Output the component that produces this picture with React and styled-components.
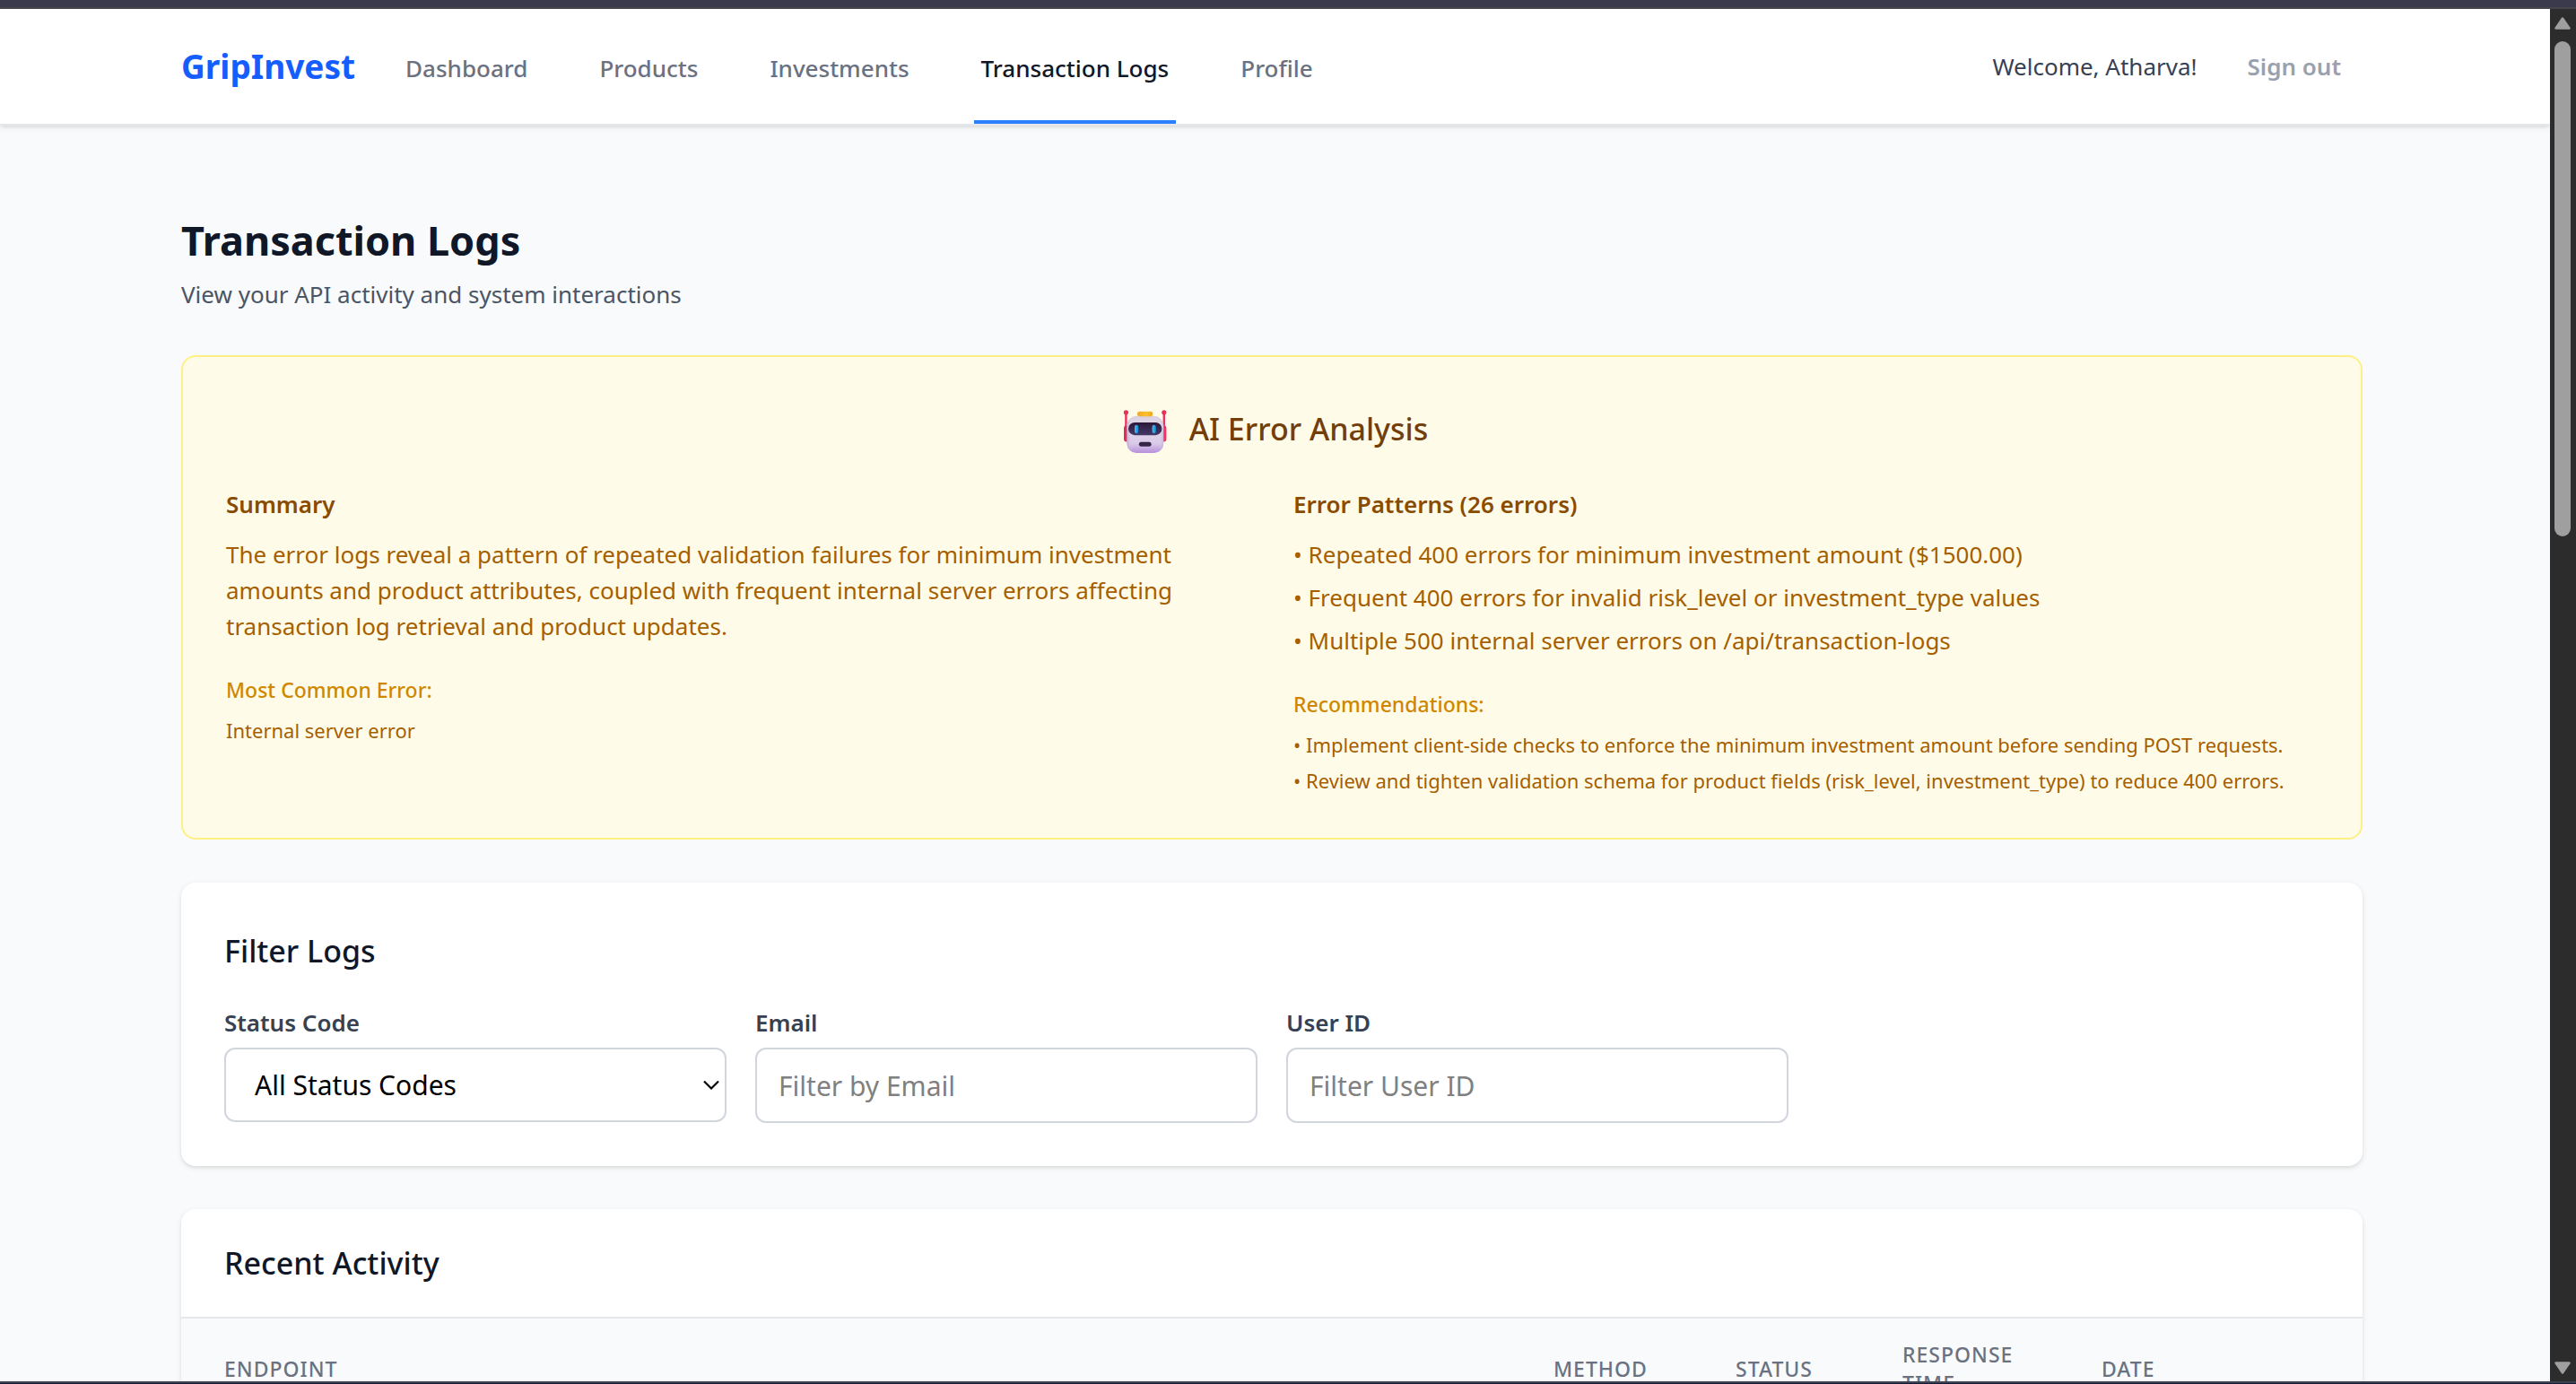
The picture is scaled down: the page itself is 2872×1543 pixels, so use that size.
import React from "react";
import styled, { createGlobalStyle } from "styled-components";

const Global = createGlobalStyle`
  *, *::before, *::after { box-sizing: border-box; }
  body {
    margin: 0;
    background: #f9fafb;
    color: #101828;
    font-family: "Noto Sans", "Open Sans", sans-serif;
    font-size: 32px;
    line-height: 48px;
  }
  h1, h2, h3, h4, p, ul { margin: 0; padding: 0; }
  ul { list-style: none; }
  a { color: inherit; text-decoration: none; }
`;

const Window = styled.div`
  display: flex;
  flex-direction: column;
  height: 100vh;
  overflow: hidden;
`;

const TopEdge = styled.div`
  flex: none;
  height: 10px;
  background: #3a3a4c;
  border-bottom: 2px solid #47474b;
`;

const BottomEdge = styled.div`
  flex: none;
  height: 3px;
  background: #151c38;
  border-top: 2px solid #3c424e;
`;

const Viewport = styled.div`
  flex: 1;
  min-height: 0;
  display: flex;
`;

const Page = styled.div`
  flex: 1;
  min-width: 0;
  overflow: hidden;
`;

const Container = styled.div`
  max-width: 2567px;
  margin: 0 auto;
  padding: 0 71px 0 64px;
`;

const NavBar = styled.header`
  background: #fff;
  border-bottom: 2px solid #e5e7eb;
  box-shadow: 0 2px 6px rgba(0, 0, 0, 0.1), 0 2px 4px -2px rgba(0, 0, 0, 0.1);
`;

const NavRow = styled(Container)`
  display: flex;
  justify-content: space-between;
  align-items: stretch;
  height: 128px;
`;

const NavGroup = styled.div`
  display: flex;
  align-items: center;
  gap: ${(p) => p.$gap};
`;

const Brand = styled.a`
  font-size: 37px;
  font-weight: 700;
  line-height: 56px;
  color: #155dfc;
`;

const NavLinks = styled.nav`
  align-self: stretch;
  display: flex;
  gap: 64px;
`;

const NavLink = styled.a`
  display: flex;
  align-items: center;
  padding: 8px 8px 0;
  border-bottom: 4px solid ${(p) => (p.$active ? "#2b7fff" : "transparent")};
  color: ${(p) => (p.$active ? "#101828" : "#6a7282")};
  font-size: 26px;
  font-weight: 500;
  line-height: 40px;
`;

const Welcome = styled.span`
  font-size: 26px;
  line-height: 40px;
  color: #364153;
`;

const SignOut = styled.button`
  border: 0;
  background: none;
  padding: 16px 24px;
  font-family: inherit;
  font-size: 26px;
  font-weight: 600;
  line-height: 40px;
  color: #99a1af;
`;

const Main = styled(Container).attrs({ as: "main" })`
  display: flex;
  flex-direction: column;
  gap: 48px;
  padding-top: 96px;
`;

const PageHeading = styled.div`
  display: flex;
  flex-direction: column;
  gap: 8px;
`;

const PageTitle = styled.h1`
  font-size: 45px;
  font-weight: 700;
  line-height: 64px;
`;

const PageNote = styled.p`
  font-size: 26px;
  line-height: 40px;
  color: #4a5565;
`;

const Analysis = styled.section`
  padding: 48px;
  border: 2px solid #fff085;
  border-radius: 16px;
  background: #fefce8;
`;

const AnalysisTitle = styled.h2`
  display: flex;
  align-items: center;
  justify-content: center;
  gap: 16px;
  margin-bottom: 32px;
  font-size: 34px;
  font-weight: 500;
  line-height: 64px;
  color: #733e0a;
`;

const AnalysisColumns = styled.div`
  display: grid;
  grid-template-columns: 1fr 1fr;
  gap: 48px;
`;

const AnalysisHeading = styled.h3`
  margin-bottom: 16px;
  font-size: 26px;
  font-weight: 600;
  line-height: 40px;
  color: #894b00;
`;

const AnalysisText = styled.p`
  font-size: 26px;
  line-height: 40px;
  color: #a65f00;
`;

const AnalysisList = styled.ul`
  display: flex;
  flex-direction: column;
  gap: 8px;
  font-size: 26px;
  line-height: 40px;
  color: #a65f00;
`;

const SubHeading = styled.h4`
  height: 48px;
  margin: 24px 0 8px;
  font-size: 32px;
  font-weight: 500;
  line-height: 48px;

  span {
    font-size: 23px;
    line-height: 32px;
    color: #d08700;
  }
`;

const SmallText = styled.p`
  font-size: 22px;
  line-height: 32px;
  color: #a65f00;
`;

const SmallList = styled(AnalysisList)`
  font-size: 22px;
  line-height: 32px;
`;

const Card = styled.section`
  border-radius: 16px;
  background: #fff;
  box-shadow: 0 2px 6px rgba(0, 0, 0, 0.1), 0 2px 4px -2px rgba(0, 0, 0, 0.1);
`;

const FilterCard = styled(Card)`
  padding: 48px;
`;

const CardTitle = styled.h2`
  font-size: 34px;
  font-weight: 500;
  line-height: 56px;
`;

const FilterGrid = styled.form`
  display: grid;
  grid-template-columns: repeat(4, 1fr);
  gap: 32px;
  margin-top: 32px;
`;

const Field = styled.div`
  display: flex;
  flex-direction: column;
  gap: 8px;
`;

const FieldLabel = styled.label`
  font-size: 26px;
  font-weight: 600;
  line-height: 40px;
  color: #364153;
`;

const TextInput = styled.input`
  width: 100%;
  height: 84px;
  padding: 16px 24px;
  border: 2px solid #d1d5dc;
  border-radius: 12px;
  background: #fff;
  font-family: inherit;
  font-size: 30px;
  line-height: 48px;
  color: #000;

  &::placeholder { color: #808080; opacity: 1; }
`;

const SelectShell = styled.div`
  display: grid;
  align-items: center;

  > * { grid-area: 1 / 1; }
  > svg { justify-self: end; margin-right: 8px; pointer-events: none; }
`;

const SelectInput = styled.select`
  appearance: none;
  width: 100%;
  height: 83px;
  padding: 16px 32px;
  border: 2px solid #d1d5dc;
  border-radius: 12px;
  background: #fff;
  font-family: inherit;
  font-size: 30px;
  line-height: 48px;
  color: #000;
`;

const TableCard = styled(Card)`
  overflow: hidden;
`;

const TableHeader = styled.div`
  padding: 32px 48px;
  border-bottom: 2px solid #e5e7eb;
`;

const LogTable = styled.table`
  width: 100%;
  table-layout: fixed;
  border-collapse: collapse;
`;

const HeadCell = styled.th`
  width: ${(p) => p.$width};
  padding: 24px 48px;
  background: #f9fafb;
  font-size: 23px;
  font-weight: 500;
  line-height: 32px;
  letter-spacing: 1px;
  text-align: left;
  text-transform: uppercase;
  color: #6a7282;
`;

const ScrollTrack = styled.div`
  flex: none;
  display: flex;
  flex-direction: column;
  align-items: center;
  width: 29px;
  padding: 9px 1px 8px 0;
  background: #2c2c2c;
`;

const ScrollThumb = styled.div`
  flex: none;
  width: 18px;
  height: 552px;
  margin: 13px 0 auto;
  border-radius: 9px;
  background: #9f9f9f;
`;

function Robot() {
  return (
    <svg width="66" height="64" viewBox="0 0 66 64" aria-hidden="true">
      <defs>
        <linearGradient id="head" x1="0" y1="0" x2="0" y2="1">
          <stop offset="0" stopColor="#d9cfe0" />
          <stop offset="0.3" stopColor="#e4dcea" />
          <stop offset="0.75" stopColor="#d9c9e8" />
          <stop offset="1" stopColor="#b78fdc" />
        </linearGradient>
        <linearGradient id="side" x1="0" y1="0" x2="1" y2="0">
          <stop offset="0" stopColor="#b39cc4" stopOpacity="0.6" />
          <stop offset="0.15" stopColor="#e4dcea" stopOpacity="0" />
          <stop offset="0.88" stopColor="#e4dcea" stopOpacity="0" />
          <stop offset="1" stopColor="#b79fc8" stopOpacity="0.5" />
        </linearGradient>
        <linearGradient id="visor" x1="0" y1="0" x2="0" y2="1">
          <stop offset="0" stopColor="#2c1738" />
          <stop offset="1" stopColor="#443a68" />
        </linearGradient>
        <linearGradient id="cap" x1="0" y1="0" x2="1" y2="0">
          <stop offset="0" stopColor="#f0a92a" />
          <stop offset="0.6" stopColor="#fbc02c" />
          <stop offset="1" stopColor="#eda41c" />
        </linearGradient>
        <linearGradient id="eye" x1="0" y1="0" x2="1" y2="0">
          <stop offset="0" stopColor="#48c0f4" />
          <stop offset="1" stopColor="#1487d2" />
        </linearGradient>
      </defs>
      <rect x="10.2" y="14" width="2.4" height="18" fill="#f0305f" />
      <rect x="52.6" y="14" width="2.4" height="18" fill="#f0305f" />
      <circle cx="11.4" cy="13.8" r="2.6" fill="#e8305e" />
      <circle cx="53.8" cy="13.8" r="2.6" fill="#e8305e" />
      <rect x="9" y="28.6" width="6" height="17.8" rx="2.4" fill="#e22a5c" />
      <rect x="50.4" y="28.6" width="6" height="17.8" rx="2.4" fill="#fb2f62" />
      <rect x="12.4" y="17.8" width="40.8" height="41.2" rx="10.5" fill="url(#head)" />
      <rect x="12.4" y="17.8" width="40.8" height="41.2" rx="10.5" fill="url(#side)" />
      <rect x="24" y="12.8" width="17.2" height="5.4" rx="2.6" fill="url(#cap)" />
      <rect x="14" y="25" width="37.4" height="14.2" rx="7.1" fill="url(#visor)" />
      <rect x="21" y="27.8" width="4.2" height="9.4" rx="2.1" fill="url(#eye)" />
      <rect x="40.6" y="27.8" width="4.2" height="9.4" rx="2.1" fill="url(#eye)" />
      <rect x="25.8" y="46.8" width="13.8" height="5" rx="2.5" fill="#352648" />
    </svg>
  );
}

const navItems = ["Dashboard", "Products", "Investments", "Transaction Logs", "Profile"];

const patterns = [
  "Repeated 400 errors for minimum investment amount ($1500.00)",
  "Frequent 400 errors for invalid risk_level or investment_type values",
  "Multiple 500 internal server errors on /api/transaction-logs",
];

const recommendations = [
  "Implement client-side checks to enforce the minimum investment amount before sending POST requests.",
  "Review and tighten validation schema for product fields (risk_level, investment_type) to reduce 400 errors.",
];

const columns = [
  { name: "Endpoint", width: "auto" },
  { name: "Method", width: "203px" },
  { name: "Status", width: "186px" },
  { name: "Response Time", width: "222px" },
  { name: "Date", width: "339px" },
];

export default function App() {
  return (
    <Window>
      <Global />
      <TopEdge />
      <Viewport>
        <Page>
          <NavBar>
            <NavRow>
              <NavGroup $gap="48px">
                <Brand href="#">GripInvest</Brand>
                <NavLinks>
                  {navItems.map((name) => (
                    <NavLink key={name} href="#" $active={name === "Transaction Logs"}>
                      {name}
                    </NavLink>
                  ))}
                </NavLinks>
              </NavGroup>
              <NavGroup $gap="32px">
                <Welcome>Welcome, Atharva!</Welcome>
                <SignOut type="button">Sign out</SignOut>
              </NavGroup>
            </NavRow>
          </NavBar>

          <Main>
            <PageHeading>
              <PageTitle>Transaction Logs</PageTitle>
              <PageNote>View your API activity and system interactions</PageNote>
            </PageHeading>

            <Analysis>
              <AnalysisTitle>
                <Robot />
                AI Error Analysis
              </AnalysisTitle>
              <AnalysisColumns>
                <div>
                  <AnalysisHeading>Summary</AnalysisHeading>
                  <AnalysisText>
                    The error logs reveal a pattern of repeated validation failures for minimum
                    investment amounts and product attributes, coupled with frequent internal
                    server errors affecting transaction log retrieval and product updates.
                  </AnalysisText>
                  <SubHeading>
                    <span>Most Common Error:</span>
                  </SubHeading>
                  <SmallText>Internal server error</SmallText>
                </div>
                <div>
                  <AnalysisHeading>Error Patterns (26 errors)</AnalysisHeading>
                  <AnalysisList>
                    {patterns.map((text) => (
                      <li key={text}>• {text}</li>
                    ))}
                  </AnalysisList>
                  <SubHeading>
                    <span>Recommendations:</span>
                  </SubHeading>
                  <SmallList>
                    {recommendations.map((text) => (
                      <li key={text}>• {text}</li>
                    ))}
                  </SmallList>
                </div>
              </AnalysisColumns>
            </Analysis>

            <FilterCard>
              <CardTitle>Filter Logs</CardTitle>
              <FilterGrid>
                <Field>
                  <FieldLabel htmlFor="status">Status Code</FieldLabel>
                  <SelectShell>
                    <SelectInput id="status" defaultValue="all">
                      <option value="all">All Status Codes</option>
                    </SelectInput>
                    <svg width="18" height="12" viewBox="0 0 18 12" aria-hidden="true">
                      <path d="M1 1.5 L9 9.5 L17 1.5" fill="none" stroke="#000" strokeWidth="2.2" />
                    </svg>
                  </SelectShell>
                </Field>
                <Field>
                  <FieldLabel htmlFor="email">Email</FieldLabel>
                  <TextInput id="email" type="text" placeholder="Filter by Email" />
                </Field>
                <Field>
                  <FieldLabel htmlFor="user">User ID</FieldLabel>
                  <TextInput id="user" type="text" placeholder="Filter User ID" />
                </Field>
              </FilterGrid>
            </FilterCard>

            <TableCard>
              <TableHeader>
                <CardTitle>Recent Activity</CardTitle>
              </TableHeader>
              <LogTable>
                <thead>
                  <tr>
                    {columns.map((c) => (
                      <HeadCell key={c.name} scope="col" $width={c.width}>
                        {c.name}
                      </HeadCell>
                    ))}
                  </tr>
                </thead>
              </LogTable>
            </TableCard>
          </Main>
        </Page>

        <ScrollTrack aria-hidden="true">
          <svg width="18" height="14" viewBox="0 0 18 14">
            <path d="M9 1.5 L16.5 12.5 H1.5 Z" fill="#9f9f9f" stroke="#9f9f9f" strokeWidth="2.5" strokeLinejoin="round" />
          </svg>
          <ScrollThumb />
          <svg width="18" height="14" viewBox="0 0 18 14">
            <path d="M9 12.5 L16.5 1.5 H1.5 Z" fill="#9f9f9f" stroke="#9f9f9f" strokeWidth="2.5" strokeLinejoin="round" />
          </svg>
        </ScrollTrack>
      </Viewport>
      <BottomEdge />
    </Window>
  );
}
